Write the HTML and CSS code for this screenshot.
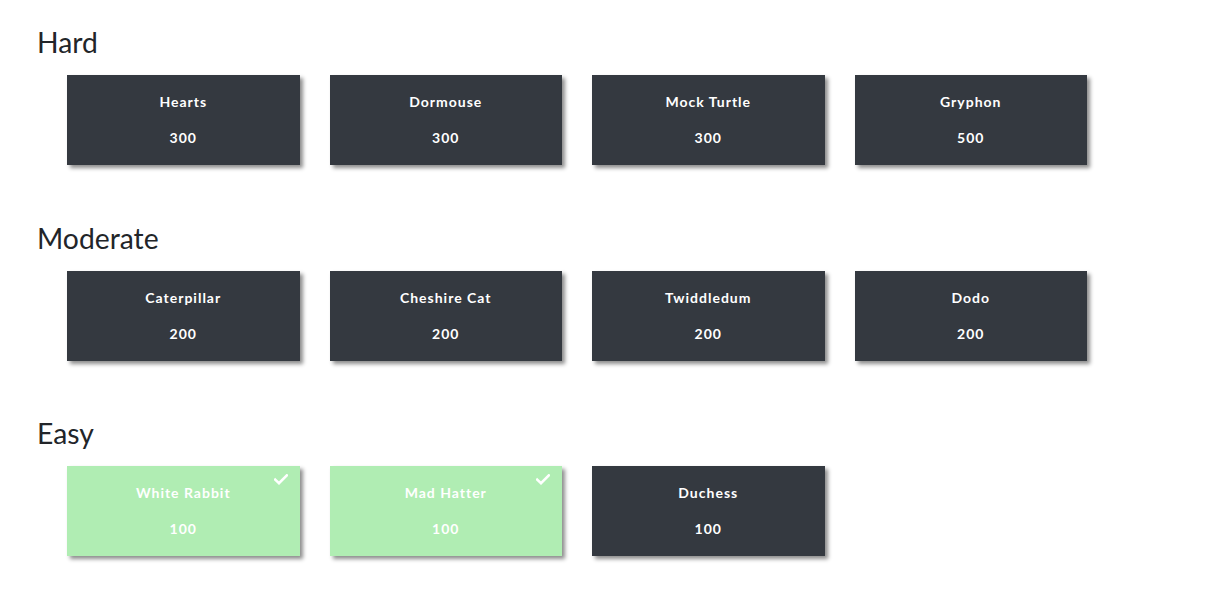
FILE: index.html
```html
<!DOCTYPE html>
<html>
<head>
<meta charset="utf-8">
<link rel="stylesheet" href="styles.css">
</head>
<body>
<main class="board">
  <section class="tier">
    <h2 class="tier-title">Hard</h2>
    <div class="cards">
      <div class="card"><span class="name">Hearts</span><span class="pts">300</span></div>
      <div class="card"><span class="name">Dormouse</span><span class="pts">300</span></div>
      <div class="card"><span class="name">Mock Turtle</span><span class="pts">300</span></div>
      <div class="card"><span class="name">Gryphon</span><span class="pts">500</span></div>
    </div>
  </section>
  <section class="tier">
    <h2 class="tier-title">Moderate</h2>
    <div class="cards">
      <div class="card"><span class="name">Caterpillar</span><span class="pts">200</span></div>
      <div class="card"><span class="name">Cheshire Cat</span><span class="pts">200</span></div>
      <div class="card"><span class="name">Twiddledum</span><span class="pts">200</span></div>
      <div class="card"><span class="name">Dodo</span><span class="pts">200</span></div>
    </div>
  </section>
  <section class="tier">
    <h2 class="tier-title">Easy</h2>
    <div class="cards">
      <div class="card solved"><svg class="check" viewBox="0 0 14 11" width="14" height="11"><path d="M1.2 5.6 L5 9.2 L12.8 1.4" fill="none" stroke="#fff" stroke-width="2.6" stroke-linecap="square"/></svg><span class="name">White Rabbit</span><span class="pts">100</span></div>
      <div class="card solved"><svg class="check" viewBox="0 0 14 11" width="14" height="11"><path d="M1.2 5.6 L5 9.2 L12.8 1.4" fill="none" stroke="#fff" stroke-width="2.6" stroke-linecap="square"/></svg><span class="name">Mad Hatter</span><span class="pts">100</span></div>
      <div class="card"><span class="name">Duchess</span><span class="pts">100</span></div>
    </div>
  </section>
</main>
</body>
</html>
```
FILE: styles.css
```css
html, body {
  margin: 0;
  padding: 0;
  background: #ffffff;
}

body {
  font-family: Lato, "Open Sans", sans-serif;
  color: #222529;
}

.board {
  padding: 26px 0 0 37px;
}

.tier {
  margin-bottom: 56.5px;
}

.tier-title {
  margin: 0;
  font-size: 28.3px;
  font-weight: 400;
  line-height: 33px;
  height: 33px;
}

.cards {
  display: flex;
  gap: 30px;
  margin: 16px 0 0 30px;
}

.card {
  position: relative;
  width: 232.5px;
  height: 90px;
  background: #343940;
  box-shadow: 3px 3px 4px rgba(0, 0, 0, 0.45);
  color: #ffffff;
  display: flex;
  flex-direction: column;
  align-items: center;
  justify-content: center;
  gap: 16px;
  font-weight: 700;
  font-size: 14px;
  letter-spacing: 1px;
}

.card.solved {
  background: #b0edb3;
}

.name, .pts {
  line-height: 20px;
}

.check {
  position: absolute;
  top: 8px;
  right: 12px;
}
```
